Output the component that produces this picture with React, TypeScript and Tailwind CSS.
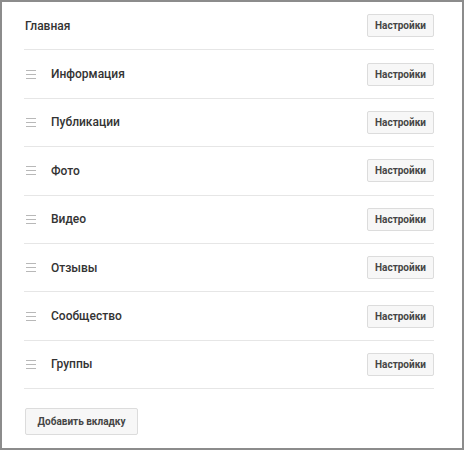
const TABS = ["Информация", "Публикации", "Фото", "Видео", "Отзывы", "Сообщество", "Группы"];

function DragHandle() {
  return (
    <div className="flex w-[10px] flex-col gap-[3px]">
      <span className="h-px w-full bg-[#b8b8b8]" />
      <span className="h-px w-full bg-[#b8b8b8]" />
      <span className="h-px w-full bg-[#b8b8b8]" />
    </div>
  );
}

function SettingsButton() {
  return (
    <button className="h-[23px] w-[67px] rounded-[2px] border border-[#dcdcdc] bg-[#f7f7f7] text-[10px] font-bold text-[#454545]">
      Настройки
    </button>
  );
}

export default function App() {
  return (
    <div
      className="flex h-[450px] w-[464px] flex-col border-2 border-[#8c8c8c] bg-white pl-[22px] pr-[28px]"
      style={{ fontFamily: "Roboto, 'Liberation Sans', Arial, sans-serif" }}
    >
      <div className="flex h-[48.4px] shrink-0 items-center justify-between border-b border-[#e6e6e6]">
        <span className="pl-[1px] text-[12px] font-medium text-[#333]">Главная</span>
        <SettingsButton />
      </div>
      {TABS.map((t) => (
        <div
          key={t}
          className="flex h-[48.4px] shrink-0 items-center justify-between border-b border-[#e6e6e6]"
        >
          <div className="flex items-center gap-[15px] pl-[2px]">
            <DragHandle />
            <span className="text-[12px] font-medium text-[#333]">{t}</span>
          </div>
          <SettingsButton />
        </div>
      ))}
      <div className="pl-[1px] pt-[19px]">
        <button className="h-[27px] w-[113px] rounded-[2px] border border-[#dcdcdc] bg-[#f7f7f7] text-[10px] font-bold text-[#454545]">
          Добавить вкладку
        </button>
      </div>
    </div>
  );
}
